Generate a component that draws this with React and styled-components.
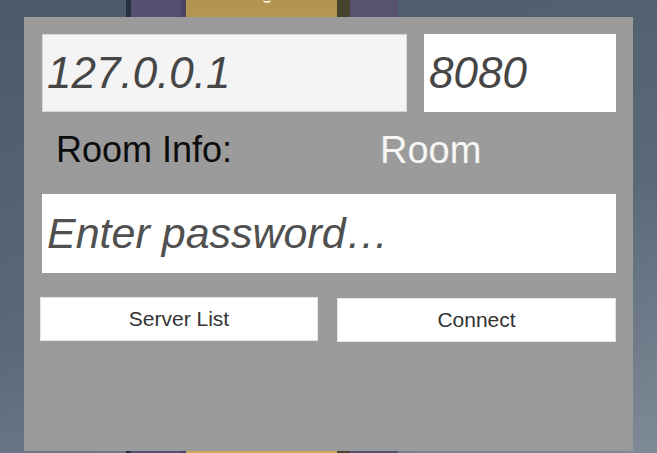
import React from "react";
import styled, { createGlobalStyle } from "styled-components";

const GlobalStyle = createGlobalStyle`
    html, body {
        margin: 0;
        padding: 0;
        overflow: hidden;
        background: #4e5b6b;
    }
    * {
        box-sizing: border-box;
    }
`;

const Stage = styled.div`
    position: relative;
    width: 657px;
    height: 453px;
    overflow: hidden;
    font-family: "Liberation Sans", Arial, sans-serif;
`;

// the 3D scene behind the dialog
const Scene = styled.div`
    display: flex;
    height: 100%;
    background: linear-gradient(165deg, #4c5969 0%, #5a6878 55%, #7f8a97 100%);
`;

const Stripe = styled.div`
    flex: ${({ grow }) => (grow ? 1 : "none")};
    width: ${({ w }) => w}px;
    background: ${({ color }) => color || "transparent"};
    position: relative;
`;

const Speck = styled.div`
    position: absolute;
    top: -3px;
    left: 77px;
    width: 8px;
    height: 6px;
    border-radius: 50%;
    border-bottom: 2px solid #f4efe0;
`;

const Panel = styled.div`
    position: absolute;
    left: 24px;
    top: 17px;
    width: 609px;
    height: 434px;
    background: #9b9b9b;
    padding: 17px 17px 0 18px;
    display: flex;
    flex-direction: column;
`;

const Row = styled.div`
    display: flex;
    gap: ${({ gap }) => gap || 0}px;
    height: ${({ h }) => h}px;
    margin-top: ${({ mt }) => mt || 0}px;
`;

const Field = styled.input`
    width: ${({ w }) => (w ? `${w}px` : "100%")};
    height: 100%;
    border: 1px solid ${({ soft }) => (soft ? "#d6d6d6" : "#ffffff")};
    background: ${({ soft }) => (soft ? "#f4f4f4" : "#ffffff")};
    font-family: "Liberation Sans", Arial, sans-serif;
    font-style: italic;
    font-size: ${({ fs }) => fs || 44}px;
    color: #464646;
    padding: 0 0 0 4px;
    outline: none;
    &::placeholder {
        color: #505050;
        opacity: 1;
    }
`;

const InfoRow = styled.div`
    display: grid;
    grid-template-columns: 324px 1fr;
    align-items: center;
    height: 82px;
    padding: 0 0 6px 14px;
`;

const Label = styled.span`
    font-size: 36px;
    color: #0c0c0c;
`;

const Value = styled.span`
    font-size: 38px;
    color: #f6f6f6;
`;

const Button = styled.button`
    width: ${({ w }) => w}px;
    height: 44px;
    margin-left: ${({ ml }) => ml || 0}px;
    margin-top: ${({ dy }) => dy || 0}px;
    background: #ffffff;
    border: 1px solid #e4e4e4;
    font-family: "Liberation Sans", Arial, sans-serif;
    font-size: 21px;
    color: #333333;
    padding: 0;
`;

export default function App() {
    return (
        <>
            <GlobalStyle />
            <Stage>
                <Scene>
                    <Stripe w={126} />
                    <Stripe w={5} color="#283040" />
                    <Stripe w={50} color="#55506f" />
                    <Stripe w={5} color="#4a4562" />
                    <Stripe w={151} color="linear-gradient(180deg, #b2954f, #c9aa5a)">
                        <Speck />
                    </Stripe>
                    <Stripe w={13} color="#45452f" />
                    <Stripe w={48} color="#57526f" />
                    <Stripe grow />
                </Scene>
                <Panel>
                    <Row h={78} gap={17}>
                        <Field soft w={365} defaultValue="127.0.0.1" />
                        <Field w={192} defaultValue="8080" />
                    </Row>
                    <InfoRow>
                        <Label>Room Info:</Label>
                        <Value>Room</Value>
                    </InfoRow>
                    <Row h={79}>
                        <Field fs={43} placeholder="Enter password…" />
                    </Row>
                    <Row h={45} mt={24}>
                        <Button w={278} ml={-2}>Server List</Button>
                        <Button w={279} ml={19} dy={1}>Connect</Button>
                    </Row>
                </Panel>
            </Stage>
        </>
    );
}
